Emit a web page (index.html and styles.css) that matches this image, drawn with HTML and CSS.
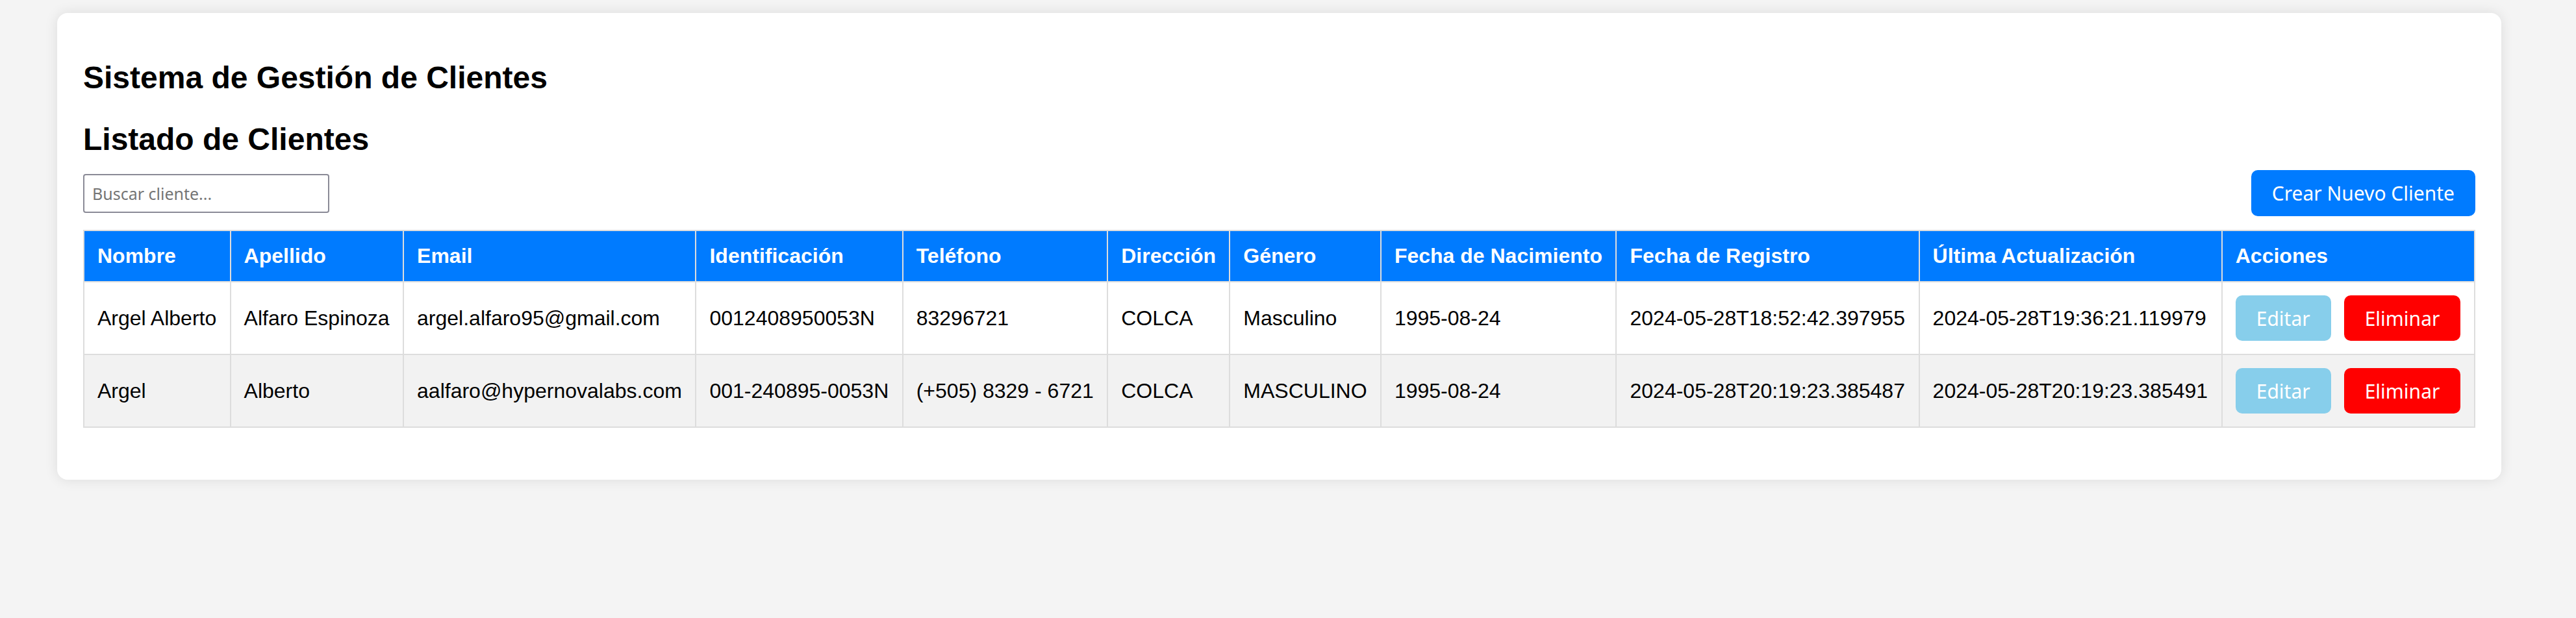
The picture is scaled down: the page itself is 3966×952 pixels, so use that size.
FILE: index.html
```html
<!DOCTYPE html>
<html lang="es">
<head>
<meta charset="utf-8">
<title>Sistema de Gestión de Clientes</title>
<link rel="stylesheet" href="styles.css">
</head>
<body>
<div class="card">
  <h1 class="title">Sistema de Gestión de Clientes</h1>
  <h2 class="subtitle">Listado de Clientes</h2>
  <div class="toolbar">
    <input class="search" type="text" placeholder="Buscar cliente...">
    <button class="btn btn-primary">Crear Nuevo Cliente</button>
  </div>
  <table class="clients">
    <thead>
      <tr>
        <th>Nombre</th>
        <th>Apellido</th>
        <th>Email</th>
        <th>Identificación</th>
        <th>Teléfono</th>
        <th>Dirección</th>
        <th>Género</th>
        <th>Fecha de Nacimiento</th>
        <th>Fecha de Registro</th>
        <th>Última Actualización</th>
        <th>Acciones</th>
      </tr>
    </thead>
    <tbody>
      <tr>
        <td>Argel Alberto</td>
        <td>Alfaro Espinoza</td>
        <td>argel.alfaro95@gmail.com</td>
        <td>0012408950053N</td>
        <td>83296721</td>
        <td>COLCA</td>
        <td>Masculino</td>
        <td>1995-08-24</td>
        <td>2024-05-28T18:52:42.397955</td>
        <td>2024-05-28T19:36:21.119979</td>
        <td><div class="actions"><button class="btn btn-edit">Editar</button><button class="btn btn-delete">Eliminar</button></div></td>
      </tr>
      <tr>
        <td>Argel</td>
        <td>Alberto</td>
        <td>aalfaro@hypernovalabs.com</td>
        <td>001-240895-0053N</td>
        <td>(+505) 8329 - 6721</td>
        <td>COLCA</td>
        <td>MASCULINO</td>
        <td>1995-08-24</td>
        <td>2024-05-28T20:19:23.385487</td>
        <td>2024-05-28T20:19:23.385491</td>
        <td><div class="actions"><button class="btn btn-edit">Editar</button><button class="btn btn-delete">Eliminar</button></div></td>
      </tr>
    </tbody>
  </table>
</div>
</body>
</html>
```
FILE: styles.css
```css
html, body {
  margin: 0;
  background: #f4f4f4;
}
body {
  padding: 20px 115px 20px 88px;
  font-family: "Liberation Sans", Arial, sans-serif;
  color: #000;
}
.card {
  background: #fff;
  border-radius: 16px;
  box-shadow: 0 0 20px rgba(0, 0, 0, 0.1);
  padding: 40px;
}
.title {
  font-size: 48px;
  font-weight: bold;
  margin: 32px 0;
}
.subtitle {
  font-size: 48px;
  font-weight: bold;
  margin: 40px 0 20px;
}
.toolbar {
  display: flex;
  justify-content: space-between;
  align-items: center;
  margin-bottom: 21px;
}
.search {
  box-sizing: border-box;
  width: 379px;
  height: 60px;
  border: 2px solid #8a8a96;
  border-radius: 4px;
  padding: 0 12px;
  font-family: "Noto Sans", sans-serif;
  font-size: 25px;
  color: #000;
  background: #fff;
  outline: none;
}
.search::placeholder {
  color: #757575;
}
.btn {
  box-sizing: border-box;
  border: none;
  border-radius: 10px;
  padding: 0 32px;
  height: 70px;
  font-family: "Noto Sans", sans-serif;
  font-size: 30px;
  color: #fff;
  cursor: pointer;
}
.btn-primary {
  background: #007bff;
  height: 71px;
}
.btn-edit {
  background: #87ceeb;
}
.btn-delete {
  background: #ff0000;
}
.clients {
  width: 100%;
  border-collapse: collapse;
  margin-bottom: 40px;
  font-size: 32px;
}
.clients th,
.clients td {
  border: 2px solid #ddd;
  padding: 20px;
  text-align: left;
  white-space: nowrap;
}
.clients th {
  background: #007bff;
  color: #fff;
  font-weight: bold;
}
.clients tbody tr:nth-child(even) {
  background: #f2f2f2;
}
.actions {
  display: flex;
  gap: 20px;
}
```
